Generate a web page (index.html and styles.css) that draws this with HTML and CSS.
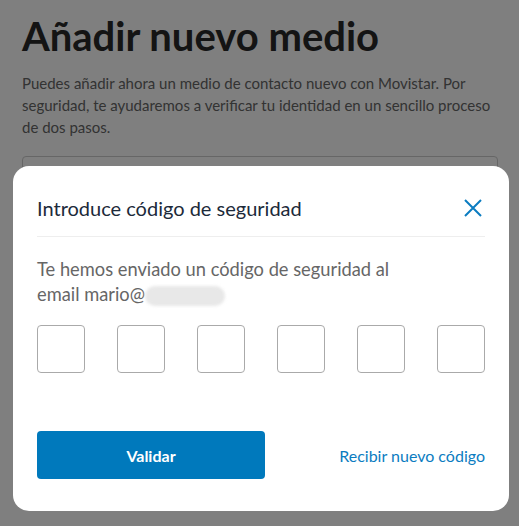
FILE: index.html
```html
<!DOCTYPE html>
<html lang="es">
<head>
<meta charset="utf-8">
<title>Añadir nuevo medio</title>
<link rel="stylesheet" href="styles.css">
</head>
<body>
<main class="page">
  <h1 class="title">Añadir nuevo medio</h1>
  <p class="intro">Puedes añadir ahora un medio de contacto nuevo con Movistar. Por seguridad, te ayudaremos a verificar tu identidad en un sencillo proceso de dos pasos.</p>
  <div class="field"><span class="field-label">Móvil o email</span></div>
</main>
<div class="overlay"></div>
<section class="modal" role="dialog" aria-label="Introduce código de seguridad">
  <header class="modal-head">
    <h2 class="modal-title">Introduce código de seguridad</h2>
    <button class="close" aria-label="Cerrar">
      <svg width="20" height="20" viewBox="0 0 20 20"><path d="M2 2L18 18M18 2L2 18" stroke="#0b7cc1" stroke-width="2" fill="none"/></svg>
    </button>
  </header>
  <p class="modal-text">Te hemos enviado un código de seguridad al email mario@<span class="blur"></span></p>
  <div class="codes">
    <input class="code" maxlength="1">
    <input class="code" maxlength="1">
    <input class="code" maxlength="1">
    <input class="code" maxlength="1">
    <input class="code" maxlength="1">
    <input class="code" maxlength="1">
  </div>
  <div class="actions">
    <button class="validate">Validar</button>
    <a class="resend" href="#">Recibir nuevo código</a>
  </div>
</section>
</body>
</html>
```
FILE: styles.css
```css
html, body {
  margin: 0;
  padding: 0;
  background: #fff;
  font-family: Lato, "Open Sans", sans-serif;
}
.page {
  padding: 12px 21px 0 22px;
}
.title {
  margin: 0;
  font-size: 40px;
  line-height: 48px;
  font-weight: 700;
  color: #282828;
}
.intro {
  margin: 12px 0 0;
  font-size: 15px;
  line-height: 22px;
  color: #666;
}
.field {
  margin-top: 18px;
  height: 48px;
  border: 1px solid #ccc;
  border-radius: 4px;
  padding: 5px 12px 0;
  line-height: 16px;
}
.field-label {
  font-size: 14px;
  color: #666;
}
.overlay {
  position: fixed;
  inset: 0;
  background: rgba(0, 0, 0, 0.5);
}
.modal {
  position: fixed;
  left: 13px;
  top: 166px;
  width: 496px;
  height: 345px;
  box-sizing: border-box;
  background: #fff;
  border-radius: 16px;
  padding: 0 24px;
}
.modal-head {
  display: flex;
  align-items: center;
  justify-content: space-between;
  height: 56px;
  padding-top: 14px;
  border-bottom: 1px solid #eeeeee;
}
.modal-title {
  margin: 0;
  font-size: 20px;
  font-weight: 400;
  color: #1c2a3a;
}
.close {
  border: 0;
  background: none;
  padding: 0;
  margin-right: 2px;
  display: flex;
  cursor: pointer;
}
.modal-text {
  margin: 20px 0 0;
  font-size: 18.3px;
  line-height: 25px;
  color: #666;
  max-width: 390px;
}
.blur {
  display: inline-block;
  width: 80px;
  height: 20px;
  vertical-align: -5px;
  border-radius: 10px;
  background: #e8e8e8;
  filter: blur(1.5px);
}
.codes {
  display: flex;
  justify-content: space-between;
  margin-top: 18px;
}
.code {
  width: 48px;
  height: 48px;
  box-sizing: border-box;
  border: 1px solid #aaa;
  border-radius: 4px;
  padding: 0;
  margin: 0;
  font: inherit;
}
.actions {
  display: flex;
  align-items: center;
  justify-content: space-between;
  margin-top: 58px;
}
.validate {
  width: 228px;
  height: 48px;
  border: 0;
  border-radius: 4px;
  background: #0079bc;
  color: #fff;
  font-family: Lato, sans-serif;
  font-size: 16px;
  font-weight: 700;
}
.resend {
  font-size: 16px;
  color: #0b7cc1;
  text-decoration: none;
}
```
